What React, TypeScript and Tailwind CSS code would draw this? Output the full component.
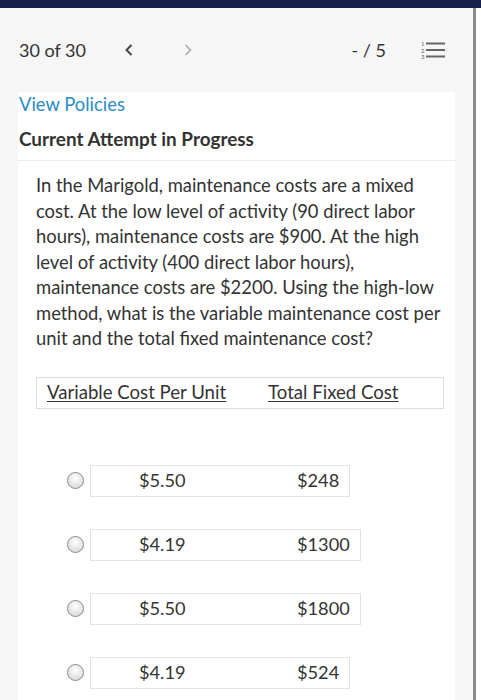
import React from "react";

const lines = [
  "In the Marigold, maintenance costs are a mixed",
  "cost. At the low level of activity (90 direct labor",
  "hours), maintenance costs are $900. At the high",
  "level of activity (400 direct labor hours),",
  "maintenance costs are $2200. Using the high-low",
  "method, what is the variable maintenance cost per",
  "unit and the total fixed maintenance cost?",
];

const options = [
  ["$5.50", "$248"],
  ["$4.19", "$1300"],
  ["$5.50", "$1800"],
  ["$4.19", "$524"],
];

function ListIcon() {
  return (
    <svg width="26" height="20" viewBox="0 0 26 20" fill="none">
      <text x="1" y="6" fontSize="6" fill="#666" fontFamily="Lato, sans-serif">1</text>
      <text x="1" y="12.5" fontSize="6" fill="#666" fontFamily="Lato, sans-serif">2</text>
      <text x="1" y="19" fontSize="6" fill="#666" fontFamily="Lato, sans-serif">3</text>
      <rect x="6" y="2.5" width="19" height="2" fill="#666" />
      <rect x="6" y="9" width="19" height="2" fill="#666" />
      <rect x="6" y="15.5" width="19" height="2" fill="#666" />
    </svg>
  );
}

export default function App() {
  return (
    <div className="w-[481px] h-[700px] overflow-hidden bg-white flex flex-col" style={{ fontFamily: "Lato, 'Open Sans', sans-serif" }}>
      <div className="h-[8px] bg-[#14204a] w-full" />
      <div className="flex flex-1">
        <div className="w-[473px] bg-[#f6f6f6] flex flex-col">
          <div className="h-[84px] flex items-center text-[#333] text-[18px]">
            <span className="ml-[19px]">30 of 30</span>
            <svg className="ml-[38px]" width="10" height="14" viewBox="0 0 10 14">
              <path d="M7.5 2 L2.5 7 L7.5 12" stroke="#444" strokeWidth="2" fill="none" />
            </svg>
            <svg className="ml-[49px]" width="10" height="14" viewBox="0 0 10 14">
              <path d="M2.5 2 L7.5 7 L2.5 12" stroke="#aaa" strokeWidth="1.6" fill="none" />
            </svg>
            <span className="ml-auto text-[#333]">- / 5</span>
            <span className="ml-[34px] mr-[27px] flex items-center"><ListIcon /></span>
          </div>
          <div className="mx-[18px] bg-white flex-1 flex flex-col text-[#333]">
            <div className="pl-[1px] text-[18.4px] leading-[24px] text-[#2b8cc4]">View Policies</div>
            <div className="pl-[1px] mt-[11px] text-[18.9px] leading-[24px] font-bold">Current Attempt in Progress</div>
            <div className="mt-[9px] h-[1px] bg-[#ececec]" />
            <div className="pl-[18px] pt-[12px] text-[18.4px] leading-[25.5px]">
              {lines.map((l, i) => (
                <div key={i} className="whitespace-nowrap">{l}</div>
              ))}
            </div>
            <div className="ml-[18px] mt-[25px] w-[408px] h-[32px] border border-[#ddd] flex items-center text-[18.6px]">
              <span className="ml-[10px] underline underline-offset-2">Variable Cost Per Unit</span>
              <span className="ml-[42px] underline underline-offset-2">Total Fixed Cost</span>
            </div>
            <div className="mt-[56px] flex flex-col gap-[32px]">
              {options.map(([a, b], i) => (
                <div key={i} className="flex items-center">
                  <span className="ml-[49px] w-[17px] h-[17px] rounded-full border border-[#8a8a8a] bg-[radial-gradient(circle_at_50%_35%,#ffffff,#d0d0d0)]" />
                  <div className="ml-[6px] h-[32px] border border-[#e2e2e2] flex items-center text-[18.2px]">
                    <span className="ml-[48px] w-[158px]">{a}</span>
                    <span className="mr-[10px]">{b}</span>
                  </div>
                </div>
              ))}
            </div>
          </div>
        </div>
        <div className="w-[3px] bg-[#8a8a8a]" />
        <div className="flex-1 bg-white" />
      </div>
    </div>
  );
}
